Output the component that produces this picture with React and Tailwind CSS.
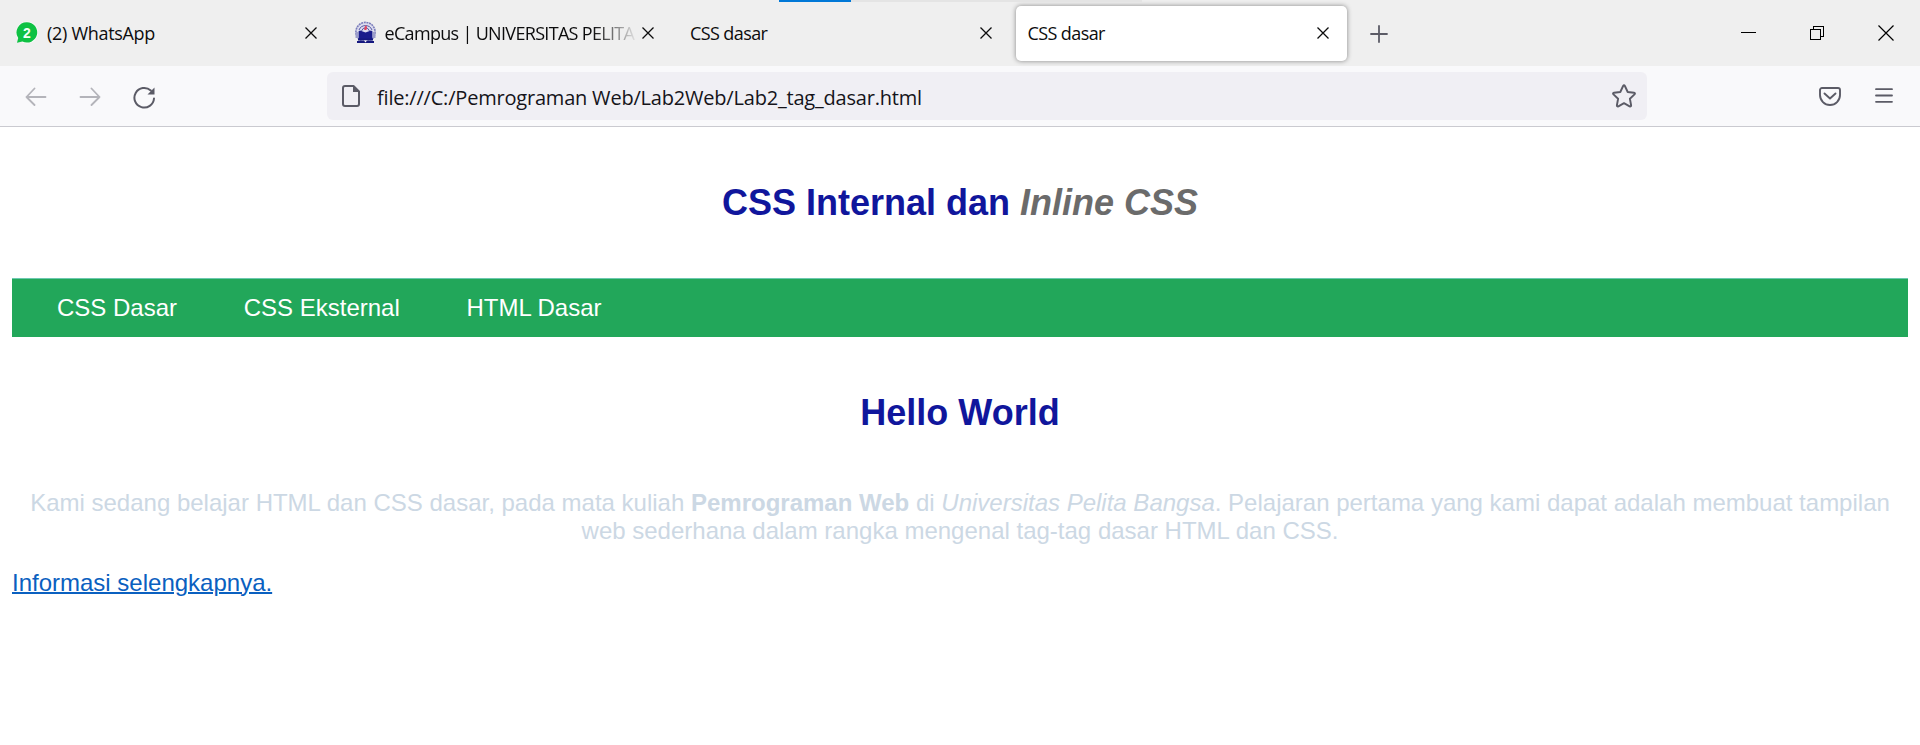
const UI_FONT = "font-['Open_Sans','Noto_Sans',sans-serif]";

function CloseIcon() {
  return (
    <svg className="size-3 shrink-0" viewBox="0 0 12 12" fill="none" stroke="#0c0c0d" strokeWidth="1.3">
      <path d="M.5.5l11 11M11.5.5l-11 11" />
    </svg>
  );
}

function WhatsAppIcon() {
  return (
    <svg className="size-6 shrink-0" viewBox="0 0 24 24">
      <circle cx="12" cy="11.5" r="11" fill="#fafafa" />
      <path d="M12 1.2a10.2 10.2 0 1 1-4.6 19.3L2 21.8l1.2-4.8A10.2 10.2 0 0 1 12 1.2z" fill="#0ec143" />
      <text x="12" y="16.6" textAnchor="middle" fontSize="14" fontWeight="700" fill="#f4fff6" fontFamily="Liberation Sans, sans-serif">2</text>
    </svg>
  );
}

function CampusIcon() {
  return (
    <svg className="size-6 shrink-0" viewBox="0 0 24 24">
      <circle cx="12.5" cy="11" r="9.6" fill="#dcdcee" stroke="#7a7dbb" strokeWidth="1.6" strokeDasharray="2 .7" />
      <path d="M6 9a7 7 0 0 1 13 0M8.5 10a4.5 6 0 0 1 8 0" fill="none" stroke="#5357a5" strokeWidth="1" />
      <path d="M12.5 4c2 2 1.800 3.200.8 5h-1.800c-1-2 .8-2.500 1-5z" fill="#dc4560" />
      <path d="M7 9.500l5.500 2 5.500-2 1.500 1v7.500h-14v-7.500z" fill="#191c8c" />
      <path d="M2.500 11H5.500v6H2.500zM19.500 11h3v6h-3z" fill="#9c9ecb" />
      <path d="M5 17.500h15v2H5zM4 20h17v2H4z" fill="#15187f" />
      <path d="M11 19.500h3l-1.500 2z" fill="#fff" />
    </svg>
  );
}

function Tab({ icon, title, active, textClass }) {
  return (
    <div
      className={
        "flex h-[55px] w-[331.5px] items-center gap-2 rounded-[5px] pr-[18px] pl-3 " +
        (active ? "bg-white shadow-[0_0_5px_rgba(0,0,0,0.45)]" : "")
      }
    >
      {icon}
      <span
        className={
          "min-w-0 flex-1 overflow-hidden text-[18px] leading-6 whitespace-nowrap text-[#0c0c0d] " + textClass
        }
      >
        {title}
      </span>
      <CloseIcon />
    </div>
  );
}

function TabStrip() {
  return (
    <div className="relative flex h-[66px] items-center bg-[#efefef] pl-[3px]">
      <div className="absolute top-0 left-[779px] h-[2px] w-[363px] bg-[#e4e4e4]">
        <div className="h-full w-[72px] bg-[#0078d7]" />
      </div>
      <div className="flex gap-[6px]">
        <Tab icon={<WhatsAppIcon />} title="(2) WhatsApp" textClass="tracking-[-0.3px]" />
        <Tab
          icon={<CampusIcon />}
          title="eCampus | UNIVERSITAS PELITA"
          textClass="-mr-1 tracking-[-0.68px] [mask-image:linear-gradient(to_right,black_82%,transparent)]"
        />
        <Tab title="CSS dasar" textClass="tracking-[-0.6px]" />
        <Tab title="CSS dasar" active textClass="tracking-[-0.6px]" />
      </div>
      <svg className="mt-px ml-[23px] size-[18px]" viewBox="0 0 18 18" stroke="#5b5b66" strokeWidth="1.8" strokeLinecap="round">
        <path d="M9 1v16M1 9h16" />
      </svg>
      <div className="mr-[26px] ml-auto flex items-center">
        <svg className="h-4 w-[15px]" viewBox="0 0 15 16" stroke="#000" shapeRendering="crispEdges">
          <path d="M0 7.500h15" />
        </svg>
        <svg className="ml-[54px] size-[14px]" viewBox="0 0 14 14" fill="none" stroke="#000" shapeRendering="crispEdges">
          <path d="M.5 3.500h10v10H.5zM3.500 3.500v-3h10v10h-3" />
        </svg>
        <svg className="ml-[54px] size-4" viewBox="0 0 16 16" stroke="#000" strokeWidth="1.2">
          <path d="M.5.5l15 15M15.500.5l-15 15" />
        </svg>
      </div>
    </div>
  );
}

function Toolbar() {
  return (
    <div className="flex h-[61px] items-center border-b border-[#cacad0] bg-[#f9f9fb]">
      <svg className="ml-[25px] h-5 w-[22px]" viewBox="0 0 22 20" fill="none" stroke="#b4b4ba" strokeWidth="1.8" strokeLinecap="round" strokeLinejoin="round">
        <path d="M20.500 11H1.500M9.500 2.500L1.500 11l8 8" />
      </svg>
      <svg className="ml-8 h-5 w-[22px]" viewBox="0 0 22 20" fill="none" stroke="#b4b4ba" strokeWidth="1.8" strokeLinecap="round" strokeLinejoin="round">
        <path d="M1.500 11h19M12.500 2.500l8 8.500-8 8" />
      </svg>
      <svg className="mt-[3px] ml-8 size-[23px]" viewBox="0 0 23 23" fill="none" stroke="#5b5b66" strokeWidth="2" strokeLinecap="round">
        <path d="M21 12.500A9.800 9.800 0 1 1 17.800 4.500" />
        <path d="M21.500 1.500v7h-7z" fill="#5b5b66" stroke="none" />
      </svg>
      <div className="ml-[171px] flex h-12 w-[1320px] items-center rounded-[6px] bg-[#f0eff4] pr-[11px] pl-[15px]">
        <svg className="h-[22px] w-[18px]" viewBox="0 0 18 22" fill="none" stroke="#5b5b66" strokeWidth="2" strokeLinejoin="round">
          <path d="M3 1h8.500L17 6.500V19a2 2 0 0 1-2 2H3a2 2 0 0 1-2-2V3a2 2 0 0 1 2-2z" />
          <path d="M11 1v6h6z" fill="#5b5b66" stroke="none" />
        </svg>
        <span className="mt-[3px] ml-[17px] text-[20px] leading-7 tracking-[-0.2px] whitespace-nowrap text-[#15141a]">
          file:///C:/Pemrograman Web/Lab2Web/Lab2_tag_dasar.html
        </span>
        <svg className="ml-auto size-6" viewBox="0 0 24 24" fill="none" stroke="#5b5b66" strokeWidth="1.9" strokeLinejoin="round">
          <path d="M11.100 2q.9-1.600 1.800 0l2.800 6 6.300.8q1.600.3.500 1.600l-4.600 4.400 1.200 6.400q.1 1.700-1.500 1.100L12 19.200l-5.600 3.100q-1.600.6-1.500-1.100l1.200-6.400L1.500 10.400Q.4 9.100 2 8.800L8.300 8z" />
        </svg>
      </div>
      <svg className="ml-[172px] h-[19px] w-[22px]" viewBox="0 0 22 19" fill="none" stroke="#5b5b66" strokeWidth="1.9" strokeLinecap="round" strokeLinejoin="round">
        <path d="M3 1h16a2 2 0 0 1 2 2v5a10 10 0 0 1-20 0V3a2 2 0 0 1 2-2z" />
        <path d="M5.500 6.500l5.500 5 5.500-5" />
      </svg>
      <svg className="-mt-px ml-[34px] h-[15px] w-[18px]" viewBox="0 0 18 15" stroke="#5b5b66" strokeWidth="1.8" strokeLinecap="round">
        <path d="M1 1.200h16M1 7.500h16M1 13.800h16" />
      </svg>
    </div>
  );
}

const links = ["CSS Dasar", "CSS Eksternal", "HTML Dasar"];

export default function App() {
  return (
    <div className="h-[745px] overflow-hidden bg-white">
      <header className={UI_FONT}>
        <TabStrip />
        <Toolbar />
      </header>
      <main className="px-3 pt-[55px] font-['Liberation_Sans',Arial,sans-serif] text-[24px] leading-[28px]">
        <h1 className="text-center text-[36px] leading-[42px] font-bold text-[#10169c]">
          CSS Internal dan <i className="text-[#6b6b6b]">Inline CSS</i>
        </h1>
        <nav className="mt-[54px] flex h-[59px] items-center gap-[66.67px] border-t border-[#6cc9b0] bg-[#22a75a] pl-[45px] text-white">
          {links.map((label) => (
            <a key={label} href="#">{label}</a>
          ))}
        </nav>
        <h1 className="mt-[55px] text-center text-[36px] leading-[42px] font-bold text-[#10169c]">Hello World</h1>
        <p className="mt-[55px] text-center text-[#ccd8e4]">
          Kami sedang belajar HTML dan CSS dasar, pada mata kuliah <b>Pemrograman Web</b> di{" "}
          <i>Universitas Pelita Bangsa</i>. Pelajaran pertama yang kami dapat adalah membuat tampilan web sederhana
          dalam rangka mengenal tag-tag dasar HTML dan CSS.
        </p>
        <p className="mt-6">
          <a href="#" className="text-[#0a60c0] underline decoration-2">Informasi selengkapnya.</a>
        </p>
      </main>
    </div>
  );
}
